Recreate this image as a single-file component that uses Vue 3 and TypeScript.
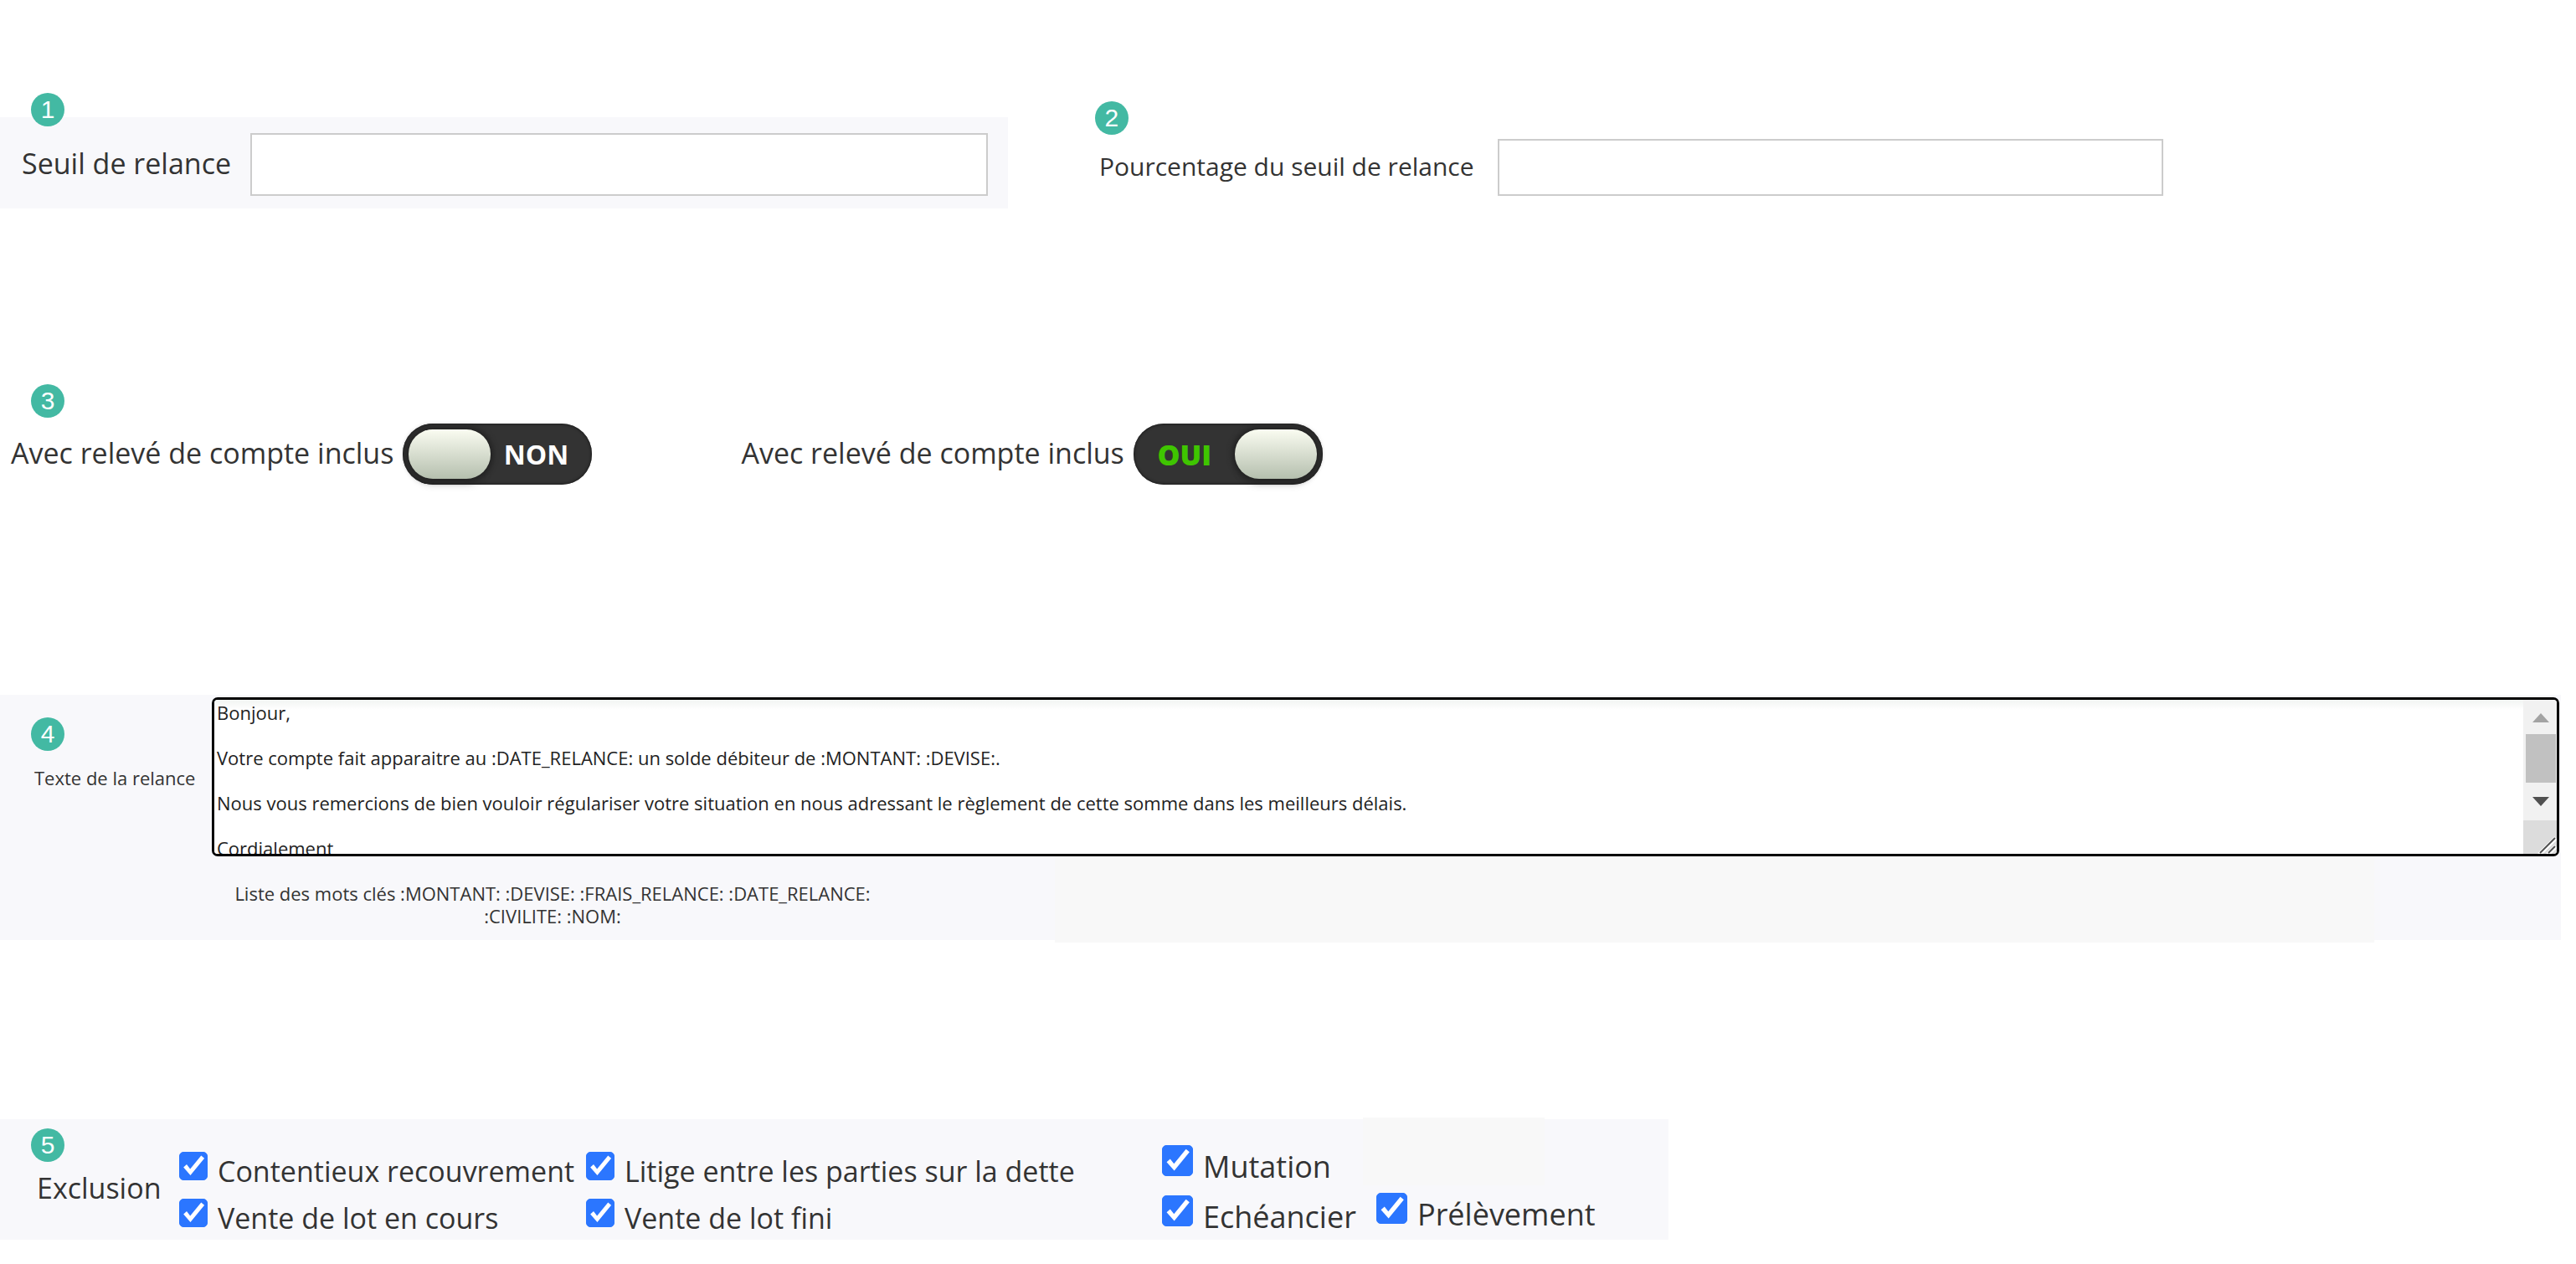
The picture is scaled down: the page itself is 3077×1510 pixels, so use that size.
<script setup lang="ts">
import { ref } from 'vue'

interface Option {
  id: string
  label: string
  checked: boolean
}

const threshold = ref('')
const percentage = ref('')
const statements = ref([
  { id: 'statement-off', on: false },
  { id: 'statement-on', on: true },
])

const message = ref(
  [
    'Bonjour,',
    '',
    'Votre compte fait apparaitre au :DATE_RELANCE: un solde débiteur de :MONTANT: :DEVISE:.',
    '',
    'Nous vous remercions de bien vouloir régulariser votre situation en nous adressant le règlement de cette somme dans les meilleurs délais.',
    '',
    'Cordialement',
  ].join('\n'),
)

const groups = ref<{ name: string; options: Option[] }[]>([
  {
    name: 'first',
    options: [
      { id: 'contentieux', label: 'Contentieux recouvrement', checked: true },
      { id: 'vente-cours', label: 'Vente de lot en cours', checked: true },
    ],
  },
  {
    name: 'second',
    options: [
      { id: 'litige', label: 'Litige entre les parties sur la dette', checked: true },
      { id: 'vente-fini', label: 'Vente de lot fini', checked: true },
    ],
  },
  {
    name: 'third',
    options: [
      { id: 'mutation', label: 'Mutation', checked: true },
      { id: 'echeancier', label: 'Echéancier', checked: true },
    ],
  },
  {
    name: 'fourth',
    options: [{ id: 'prelevement', label: 'Prélèvement', checked: true }],
  },
])
</script>

<template>
  <main class="page">
    <div class="thresholds">
      <section class="field field-main">
        <span class="badge">1</span>
        <label for="threshold">Seuil de relance</label>
        <input id="threshold" v-model="threshold" type="text" />
      </section>
      <section class="field field-percent">
        <span class="badge">2</span>
        <label for="percentage">Pourcentage du seuil de relance</label>
        <input id="percentage" v-model="percentage" type="text" />
      </section>
    </div>

    <section class="statements">
      <span class="badge">3</span>
      <div v-for="item in statements" :key="item.id" class="statement">
        <label :for="item.id">Avec relevé de compte inclus</label>
        <button
          :id="item.id"
          type="button"
          role="switch"
          class="switch"
          :class="{ on: item.on }"
          :aria-checked="item.on"
          @click="item.on = !item.on"
        >
          <span class="knob"></span>
          <span class="state">{{ item.on ? 'OUI' : 'NON' }}</span>
        </button>
      </div>
    </section>

    <section class="message">
      <span class="badge">4</span>
      <label class="message-label" for="message">Texte de la relance</label>
      <div class="message-body">
        <div class="editor">
          <textarea id="message" v-model="message"></textarea>
          <svg class="scrollbar" viewBox="0 0 40 184" aria-hidden="true">
            <rect width="40" height="184" fill="#f1f1f1" />
            <path d="M11 27L21 16L31 27Z" fill="#a3a3a3" />
            <rect x="3" y="41" width="36" height="58" fill="#c1c1c1" />
            <path d="M11 116L21 127L31 116Z" fill="#505050" />
            <rect y="144" width="40" height="40" fill="#dcdcdc" />
            <path d="M19 185L39 165M29 185L39 175" stroke="#fff" stroke-width="5" />
            <path d="M20 183L38 165M30 183L38 175" stroke="#505050" stroke-width="2" />
          </svg>
        </div>
        <p class="keywords">
          Liste des mots clés :MONTANT: :DEVISE: :FRAIS_RELANCE: :DATE_RELANCE:<br />
          :CIVILITE: :NOM:
        </p>
      </div>
    </section>

    <section class="exclusion" aria-labelledby="exclusion-title">
      <span class="badge">5</span>
      <span id="exclusion-title" class="exclusion-title">Exclusion</span>
      <div v-for="group in groups" :key="group.name" class="group" :class="group.name">
        <label v-for="option in group.options" :key="option.id" class="option" :for="option.id">
          <input :id="option.id" v-model="option.checked" type="checkbox" />
          <span>{{ option.label }}</span>
        </label>
      </div>
    </section>
  </main>
</template>

<style>
body {
  margin: 0;
  background: #fff;
}
</style>

<style scoped>
.page {
  display: flex;
  flex-direction: column;
  padding-bottom: 29px;
  color: #333;
  font-family: 'Open Sans', 'Noto Sans', sans-serif;
  font-size: 34px;
}

.page * {
  box-sizing: border-box;
}

.badge {
  position: absolute;
  left: 37px;
  width: 40px;
  height: 40px;
  border-radius: 50%;
  background: #43b9a3;
  color: #fff;
  font: 30px/40px 'Liberation Sans', Arial, sans-serif;
  text-align: center;
}

label {
  white-space: nowrap;
}

/* Thresholds */
.thresholds {
  display: flex;
  align-items: flex-start;
  padding-top: 140px;
}

.field {
  position: relative;
  display: flex;
  align-items: center;
}

.field label,
.statement label {
  padding-bottom: 4px;
}

.field input {
  flex: 1;
  min-width: 0;
  padding: 0 12px;
  border: 2px solid #ccc;
  background: #fff;
  color: inherit;
  font: inherit;
}

.field-main {
  width: 39.13%;
  gap: 23px;
  padding: 19px 24px 15px 26px;
  background: #f8f8fb;
}

.field-main input {
  height: 75px;
}

.field-main .badge {
  top: -29px;
}

.field-percent {
  width: 41.3%;
  margin-left: 3.54%;
  gap: 28px;
  padding-top: 26px;
  font-size: 30px;
}

.field-percent input {
  height: 68px;
}

.field-percent .badge {
  left: -5px;
  top: -19px;
}

/* Statement switches */
.statements {
  position: relative;
  display: flex;
  gap: 178px;
  margin-top: 210px;
  padding: 47px 13px 0;
}

.statements .badge {
  top: 0;
}

.statement {
  display: flex;
  align-items: center;
  gap: 11px;
}

.switch {
  display: flex;
  align-items: center;
  width: 226px;
  height: 73px;
  padding: 7px;
  border: 0;
  border-radius: 36px;
  background: #333;
  box-shadow: inset 0 0 3px 1px #1f1f1f;
  color: #fff;
  font: 700 32px 'Open Sans', 'Noto Sans', sans-serif;
}

.knob {
  flex: none;
  width: 98px;
  height: 59px;
  border-radius: 29px;
  background: linear-gradient(#fafcf1, #b5bfae);
  box-shadow: 0 0 6px 3px #222, 0 12px 10px -4px rgba(0, 0, 0, 0.12);
}

.state {
  flex: 1;
  padding-right: 6px;
  text-align: center;
}

.switch.on {
  flex-direction: row-reverse;
  color: #3fc500;
  font-size: 34px;
  font-weight: 800;
}

/* Message */
.message {
  position: relative;
  display: flex;
  align-items: flex-start;
  width: 99.42%;
  margin-top: 251px;
  padding: 3px 2px 15px 0;
  background: #f8f8fb;
  font-size: 22px;
  line-height: 27px;
}

.message::before {
  content: '';
  position: absolute;
  left: 41.2%;
  right: 7.3%;
  top: 193px;
  bottom: -3px;
  background: #f8f8f8;
}

.message .badge {
  top: 27px;
}

.message-label {
  flex: none;
  width: 253px;
  padding: 83px 0 0 41px;
}

.message-body {
  position: relative;
  flex: 1;
  min-width: 0;
}

.editor {
  display: flex;
  border: 3px solid #000;
  border-radius: 7px;
  background: #fff;
  overflow: hidden;
}

textarea {
  display: block;
  flex: 1;
  min-width: 0;
  height: 184px;
  margin: 0;
  padding: 2px 3px 0;
  border: 0;
  outline: 0;
  resize: none;
  overflow: hidden;
  background: linear-gradient(#f1f4f2, #fff 12px);
  color: #222;
  font: inherit;
}

.scrollbar {
  flex: none;
  width: 40px;
  height: 184px;
}

.keywords {
  width: 814px;
  margin: 31px 0 0;
  text-align: center;
}

/* Exclusion */
.exclusion {
  position: relative;
  display: flex;
  align-items: flex-start;
  width: 64.77%;
  height: 144px;
  margin-top: 214px;
  background: #f8f8fb;
}

.exclusion::before {
  content: '';
  position: absolute;
  left: 81.7%;
  width: 10.9%;
  top: -2px;
  height: 81px;
  background: #f8f8f8;
}

.exclusion .badge {
  top: 11px;
}

.exclusion-title {
  width: 214px;
  padding: 59px 0 0 44px;
}

.group {
  position: relative;
  flex: none;
  padding-top: 34px;
  line-height: 56px;
}

.option {
  display: flex;
  gap: 12px;
}

.option input {
  appearance: none;
  flex: none;
  width: 34px;
  height: 34px;
  margin: 5px 0 0;
  border: 1px solid #2b76ff;
  border-radius: 5px;
  background: #fff;
}

.option input:checked {
  background: #2b76ff;
}

.option input:checked::after {
  content: '';
  display: block;
  height: 100%;
  background: #fff;
  clip-path: polygon(13% 55%, 25% 44%, 38% 61%, 79% 11%, 91% 21%, 39% 84%);
}

.first {
  width: 486px;
}

.second {
  width: 688px;
}

.third {
  width: 256px;
}

.third,
.fourth {
  padding-top: 27px;
  font-size: 36px;
  line-height: 60px;
}

.third .option input,
.fourth .option input {
  width: 37px;
  height: 37px;
  margin-top: 4px;
}

.fourth {
  padding-top: 84px;
}
</style>
